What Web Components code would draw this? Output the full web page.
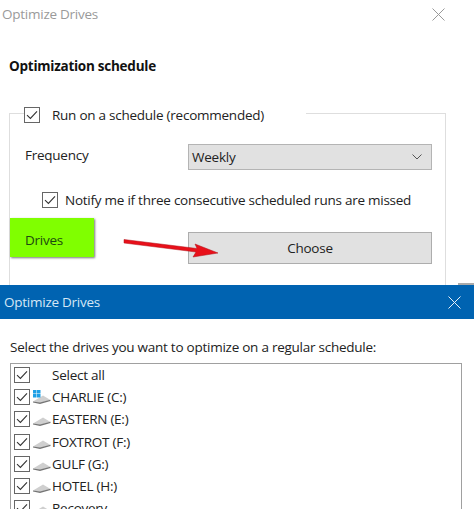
<!DOCTYPE html>
<html>
<head>
<meta charset="utf-8">
<title>Optimize Drives</title>
<style>
html, body { margin: 0; padding: 0; background: #fff; }
body { width: 474px; height: 509px; overflow: hidden; font-family: "Open Sans", "Noto Sans", sans-serif; font-size: 13.5px; letter-spacing: -0.25px; color: #222; }
</style>
</head>
<body>
<schedule-window></schedule-window>
<drives-window>
    <drive-row kind="none" label="Select all"></drive-row>
    <drive-row kind="system" label="CHARLIE (C:)"></drive-row>
    <drive-row kind="disk" label="EASTERN (E:)"></drive-row>
    <drive-row kind="disk" label="FOXTROT (F:)"></drive-row>
    <drive-row kind="disk" label="GULF (G:)"></drive-row>
    <drive-row kind="disk" label="HOTEL (H:)"></drive-row>
    <drive-row kind="disk" label="Recovery"></drive-row>
</drives-window>

<script>
class CheckBox extends HTMLElement {
    constructor() {
        super();
        this.attachShadow({ mode: "open" });
    }

    connectedCallback() {
        this.shadowRoot.innerHTML = `
        <style>
        :host { display: block; width: 16px; height: 16px; flex: none; }
        svg { display: block; }
        </style>
        <svg width="16" height="16" viewBox="0 0 16 16">
            <rect x="0.5" y="0.5" width="15" height="15" fill="#fff" stroke="#666"/>
            <path d="M3 8.2 L6.4 11.4 L13 4.4" fill="none" stroke="#333" stroke-width="1.1"/>
        </svg>
        `;
    }
}
customElements.define("check-box", CheckBox);

class CloseIcon extends HTMLElement {
    constructor() {
        super();
        this.attachShadow({ mode: "open" });
    }

    connectedCallback() {
        let couleur = this.getAttribute("color") || "#999";
        this.shadowRoot.innerHTML = `
        <style>
        :host { display: block; width: 13px; height: 13px; flex: none; }
        svg { display: block; }
        </style>
        <svg width="13" height="13" viewBox="0 0 13 13">
            <path d="M0.5 0.5 L12.5 12.5 M12.5 0.5 L0.5 12.5" fill="none" stroke="${couleur}" stroke-width="1"/>
        </svg>
        `;
    }
}
customElements.define("close-icon", CloseIcon);

class ScheduleWindow extends HTMLElement {
    constructor() {
        super();
        this.attachShadow({ mode: "open" });
    }

    connectedCallback() {
        this.shadowRoot.innerHTML = `
        <style>
        :host { display: block; position: relative; height: 285px; overflow: hidden; }
        .titre { display: flex; justify-content: space-between; align-items: center; height: 28px; padding: 0 29px 0 2px; color: #9a9a9a; }
        h2 { margin: 0; padding: 27px 0 0 9px; font-size: 13.5px; line-height: 22px; font-weight: 700; color: #111; }
        fieldset { margin: 26px 28px 0 9px; padding: 0 13px 0 15px; height: 220px; border: 1px solid #dedede; border-bottom: 0; box-sizing: border-box; min-width: 0; }
        legend { margin-left: -1px; padding: 4px 0 0; width: 282px; height: 20px; box-sizing: border-box; display: flex; align-items: center; gap: 12px; }
        .ligne { display: flex; align-items: center; }
        .freq { margin-top: 21px; justify-content: space-between; height: 26px; }
        .freq > span { position: relative; top: -2px; }
        .select { width: 244px; height: 26px; box-sizing: border-box; background: #e1e1e1; border: 1px solid #b4b4b4; display: flex; align-items: center; justify-content: space-between; padding: 0 9px 0 3px; }
        .notif { margin: 21px 0 0 17px; gap: 7px; height: 18px; white-space: nowrap; }
        .bouton { margin: 23px 0 0 163px; width: 244px; height: 32px; box-sizing: border-box; background: #e1e1e1; border: 1px solid #adadad; display: flex; align-items: center; justify-content: center; }
        .vert { position: absolute; left: 10px; top: 218px; width: 84px; height: 39px; box-sizing: border-box; padding: 13px 0 0 15px; background: #80ff00; color: #1d4a10; box-shadow: 1px 1px 2px #777; }
        .fleche { position: absolute; left: 120px; top: 232px; }
        .coin { position: absolute; right: 0; top: 283px; width: 16px; height: 2px; background: #555; opacity: .5; }
        </style>
        <div class="titre"><span>Optimize Drives</span><close-icon></close-icon></div>
        <h2>Optimization schedule</h2>
        <fieldset>
            <legend><check-box></check-box><span>Run on a schedule (recommended)</span></legend>
            <div class="ligne freq"><span>Frequency</span>
                <div class="select"><span>Weekly</span>
                    <svg width="10" height="6" viewBox="0 0 10 6"><path d="M0.5 0.5 L5 5 L9.5 0.5" fill="none" stroke="#555"/></svg>
                </div>
            </div>
            <div class="ligne notif"><check-box></check-box><span>Notify me if three consecutive scheduled runs are missed</span></div>
            <div class="bouton">Choose</div>
        </fieldset>
        <div class="vert">Drives</div>
        <svg class="fleche" width="110" height="34" viewBox="0 0 110 34">
            <path d="M4 7.5 L77 16.5 L75 12 L98 21 L73 25 L76 20 L4 11 Z" fill="#e8101a" stroke="#b01018" stroke-width="0.5"/>
        </svg>
        <div class="coin"></div>
        `;
    }
}
customElements.define("schedule-window", ScheduleWindow);

class DrivesWindow extends HTMLElement {
    constructor() {
        super();
        this.attachShadow({ mode: "open" });
    }

    connectedCallback() {
        this.shadowRoot.innerHTML = `
        <style>
        :host { display: block; height: 224px; overflow: hidden; background: #fff; }
        .barre { height: 34px; background: #0063b1; color: #d5e7f6; display: flex; align-items: center; justify-content: space-between; padding: 0 13px 0 4px; }
        p { margin: 0; padding: 17px 0 0 10px; line-height: 22px; white-space: nowrap; }
        .liste { margin: 5px 12px 0 10px; border: 1px solid #a0a0a0; height: 200px; box-sizing: border-box; }
        </style>
        <div class="barre"><span>Optimize Drives</span><close-icon color="#e8f0f8"></close-icon></div>
        <p>Select the drives you want to optimize on a regular schedule:</p>
        <div class="liste"><slot></slot></div>
        `;
    }
}
customElements.define("drives-window", DrivesWindow);

class DriveRow extends HTMLElement {
    constructor() {
        super();
        this.attachShadow({ mode: "open" });
    }

    connectedCallback() {
        let kind = this.getAttribute("kind");
        // le petit logo bleu du disque systeme
        let logo = kind == "system" ? `<g fill="#1fa0e6"><rect x="1" y="2" width="3.5" height="3.5"/><rect x="5" y="2" width="3.5" height="3.5"/><rect x="1" y="6" width="3.5" height="3.5"/><rect x="5" y="6" width="3.5" height="3.5"/></g>` : "";
        let icone = kind == "none" ? "" : `
            <svg width="20" height="18" viewBox="0 0 20 18">
                <path d="M1 13.5 L11 7.5 L18.5 12 L8 15 Z" fill="#cfcfcf"/>
                <path d="M1 13.5 L8 14.6 L18.5 11.8 L18.5 13 L8 16 L1 14.5 Z" fill="#757575"/>
                ${logo}
            </svg>`;
        this.shadowRoot.innerHTML = `
        <style>
        :host { display: flex; align-items: center; height: 22.2px; padding-left: 3px; white-space: nowrap; }
        .icone { width: 20px; height: 18px; margin: 0 0 0 2px; }
        svg { display: block; }
        </style>
        <check-box></check-box>
        <div class="icone">${icone}</div>
        <span>${this.getAttribute("label")}</span>
        `;
    }
}
customElements.define("drive-row", DriveRow);
</script>
</body>
</html>
